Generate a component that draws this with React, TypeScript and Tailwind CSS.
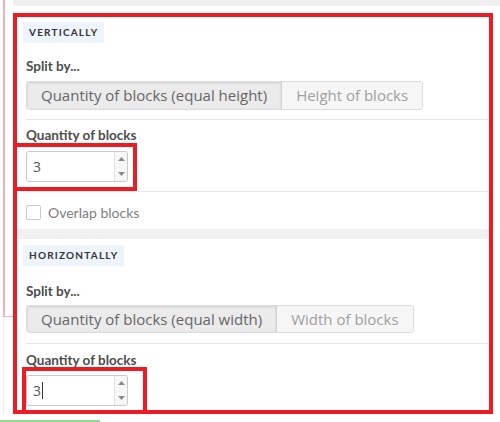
const RED = 'border-[#ed1c24]';

function Badge({ label }: { label: string }) {
  return (
    <div className="-ml-[3px] self-start h-[21px] flex items-center px-[6px] bg-[#edf4fb] text-[10px] font-bold tracking-[1.2px] text-[#333] font-['Lato',sans-serif]">
      {label}
    </div>
  );
}

function Label({ children, className = '' }: { children: string; className?: string }) {
  return (
    <div className={`text-[13.5px] leading-[16px] font-bold text-[#4d4d4d] font-['Lato',sans-serif] ${className}`}>
      {children}
    </div>
  );
}

function SplitButtons({ first, second, className = '' }: { first: string; second: string; className?: string }) {
  return (
    <div
      className={`self-start flex border border-[#dcdcdc] rounded-[3px] overflow-hidden text-[15px] font-['Open_Sans',sans-serif] ${className}`}
    >
      <div className="px-[14px] flex items-center bg-[#ebebeb] text-[#666] border-r border-[#d2d2d2] shadow-[inset_0_1px_3px_rgba(0,0,0,0.12)]">
        {first}
      </div>
      <div className="px-[14px] flex items-center bg-[#f6f6f6] text-[#a0a0a0]">{second}</div>
    </div>
  );
}

function NumberInput({ caret = false, className = '' }: { caret?: boolean; className?: string }) {
  return (
    <div
      className={`w-[102px] h-[31px] flex border border-[#c9c9c9] rounded-[3px] bg-white font-['Open_Sans',sans-serif] ${className}`}
    >
      <div className="flex-1 flex items-center pl-[6px] text-[14px] text-[#555]">
        3{caret && <span className="ml-[1px] w-px h-[17px] bg-[#333]" />}
      </div>
      <div className="w-[13px] flex flex-col border-l border-[#e2e2e2] bg-[#f7f7f7] rounded-r-[3px]">
        <div className="flex-1 flex items-center justify-center">
          <svg width="7" height="4" viewBox="0 0 7 4">
            <path d="M0 4 L3.5 0 L7 4 Z" fill="#8a8a8a" />
          </svg>
        </div>
        <div className="flex-1 flex items-center justify-center">
          <svg width="7" height="4" viewBox="0 0 7 4">
            <path d="M0 0 L3.5 4 L7 0 Z" fill="#8a8a8a" />
          </svg>
        </div>
      </div>
    </div>
  );
}

export default function App() {
  return (
    <div className="relative w-[500px] h-[422px] bg-white flex flex-col overflow-hidden">
      <div className="flex h-[414px]">
        {/* left gutter with the edge of the card behind */}
        <div className="w-[13px] flex flex-col">
          <div className="ml-[3px] h-[317px] border-l-2 border-b border-[#f5b3b3] bg-white" />
          <div className="ml-[3px] flex-1 border-l border-[#eeeeee]" />
        </div>

        <div className="w-[487px] flex flex-col">
          <div className="h-[6px] bg-[#f0f0f0]" />
          <div className="h-[7px]" />
          <div className={`w-[480px] h-[401px] border-4 ${RED} bg-[#f1f1f1] flex flex-col gap-[10px] overflow-hidden`}>
            {/* vertical split */}
            <div className="h-[212px] bg-white pl-[9px] pt-[5px] flex flex-col">
              <Badge label="VERTICALLY" />
              <Label className="mt-[15px]">Split by...</Label>
              <SplitButtons
                className="mt-[7px] h-[29px]"
                first="Quantity of blocks (equal height)"
                second="Height of blocks"
              />
              <div className="mt-[9px] h-px bg-[#e6e6e6]" />
              <Label className="mt-[7px]">Quantity of blocks</Label>
              <NumberInput className="mt-[8px]" />
              <div className="mt-[9px] h-px bg-[#e6e6e6]" />
              <label className="mt-[10px] flex items-center gap-[7px]">
                <span className="w-[15px] h-[15px] border border-[#c5cad3] rounded-[2px] bg-white" />
                <span className="text-[14px] text-[#808080] font-['Lato',sans-serif]">Overlap blocks</span>
              </label>
            </div>

            {/* horizontal split */}
            <div className="flex-1 bg-white pl-[9px] pt-[6px] flex flex-col">
              <Badge label="HORIZONTALLY" />
              <Label className="mt-[17px]">Split by...</Label>
              <SplitButtons
                className="mt-[6px] h-[28px]"
                first="Quantity of blocks (equal width)"
                second="Width of blocks"
              />
              <div className="mt-[10px] h-px bg-[#e6e6e6]" />
              <Label className="mt-[8px]">Quantity of blocks</Label>
              <NumberInput caret className="mt-[7px]" />
            </div>
          </div>
        </div>
      </div>

      <div className="h-[8px] flex items-end">
        <div className="w-[100px] h-[2px] bg-[#8fdc8f]" />
      </div>

      {/* annotation boxes */}
      <div className={`absolute left-[13px] top-[143px] w-[124px] h-[48px] border-4 ${RED}`} />
      <div className={`absolute left-[22px] top-[367px] w-[125px] h-[47px] border-4 ${RED}`} />
    </div>
  );
}
